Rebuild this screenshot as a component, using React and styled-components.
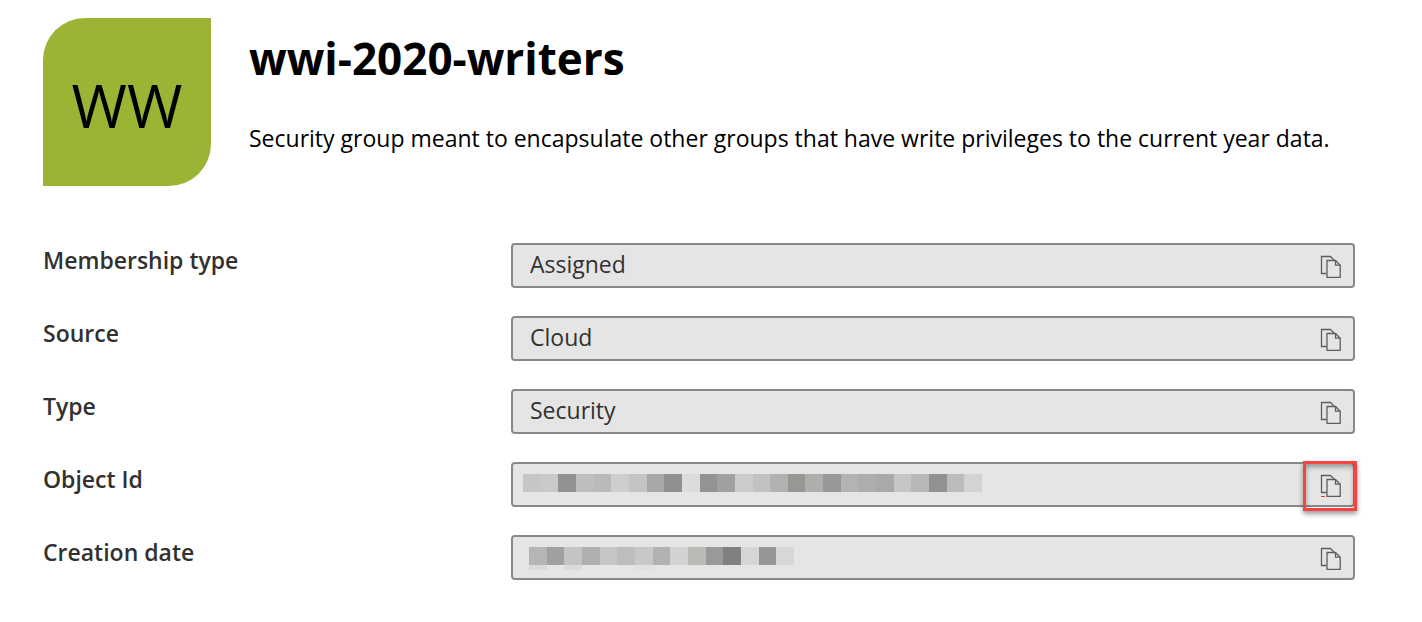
import React from "react";
import styled, { createGlobalStyle } from "styled-components";

const GlobalStyle = createGlobalStyle`
  *, *::before, *::after { box-sizing: border-box; }
  body {
    margin: 0;
    background: #fff;
    color: #000;
    font-family: "Segoe UI", "Open Sans", "Noto Sans", sans-serif;
    font-size: 23px;
  }
`;

const Page = styled.main`
  padding: 18px 67px 40px 43px;
`;

const Header = styled.header`
  display: flex;
  gap: 38px;
  margin-bottom: 57px;
`;

const Avatar = styled.div`
  flex: none;
  display: flex;
  align-items: center;
  justify-content: center;
  width: 168px;
  height: 168px;
  padding-top: 6px;
  border-radius: 42px 0;
  background: #9ab434;
  font-size: 60px;
  line-height: 80px;
`;

const Heading = styled.div`
  display: flex;
  flex-direction: column;
  gap: 34px;
  padding-top: 10px;
`;

const Title = styled.h1`
  margin: 0;
  font-size: 44px;
  font-weight: 700;
  line-height: 60px;
`;

const Description = styled.p`
  margin: 0;
  line-height: 32px;
`;

const Properties = styled.div`
  display: flex;
  flex-direction: column;
  gap: 28px;
`;

const Row = styled.div`
  display: grid;
  grid-template-columns: 468px 1fr;
`;

const Label = styled.label`
  color: #323130;
  font-weight: 600;
  line-height: 34px;
`;

const Field = styled.div`
  position: relative;
  display: flex;
  align-items: center;
  height: 45px;
  border: 2px solid #888;
  border-radius: 4px;
  background: #e5e5e5;
`;

const Value = styled.input`
  flex: 1;
  min-width: 0;
  height: 41px;
  padding: 0 17px 3px;
  border: 0;
  outline: 0;
  background: transparent;
  color: #323130;
  font: inherit;
`;

const Redacted = styled.output`
  flex: 1;
  min-width: 0;
  padding-left: ${(p) => p.$inset}px;
`;

const Mosaic = styled.svg`
  display: block;
  shape-rendering: crispEdges;
`;

const CopyButton = styled.button`
  flex: none;
  display: flex;
  padding: 0 11px;
  border: 0;
  background: transparent;
  color: #5e5e5e;
  cursor: pointer;
`;

const Highlight = styled.span`
  position: absolute;
  top: -3px;
  right: -4px;
  width: 54px;
  height: 50px;
  border: 3px solid #f94343;
  box-shadow: 0 3px 5px rgba(0, 0, 0, 0.4), inset 0 3px 5px rgba(0, 0, 0, 0.35);
  pointer-events: none;
`;

function CopyIcon({ marked }) {
  return (
    <svg width="22" height="27" viewBox="0 -3 22 27" fill="none" stroke="currentColor" strokeWidth="1.3" aria-hidden="true">
      <path d="M6.5 18.5H1.5V1.5H10.5L14 5" />
      <path d="M7 5.5H15.5L20.2 10.2V22.4H7Z" />
      <path d="M15.5 5.5V10.2H20.2" />
      {marked && <rect x="1" y="22" width="4" height="1" fill="#ff2a2a" stroke="none" />}
    </svg>
  );
}

const properties = [
  { id: "membership", label: "Membership type", value: "Assigned" },
  { id: "source", label: "Source", value: "Cloud" },
  { id: "type", label: "Type", value: "Security" },
  {
    id: "object-id",
    label: "Object Id",
    inset: 10,
    width: 459,
    highlighted: true,
    cells: [
      "#c6c6c6", "#c9c9c9", "#919191", "#bebebe", "#bababa", "#cecece", "#c4c4c4",
      "#a8a8a8", "#90908e", "#dcdcdc", "#939393", "#a0a09e", "#cccccc", "#c1c1c1",
      "#b1b1b1", "#979794", "#aeaeab", "#989898", "#b3b3b3", "#adadad", "#a9a9a9",
      "#c5c5c5", "#b8b8b8", "#929292", "#bcbcbc", "#d3d3d3",
    ],
  },
  {
    id: "created",
    label: "Creation date",
    inset: 16,
    width: 265,
    cells: [
      "#b5b5b3", "#a0a09e", "#c4c4c4", "#b0b0b0", "#c5c5c5", "#bdbdbd", "#c8c8c8",
      "#b2b2b2", "#d2d2d2", "#babab7", "#999999", "#81807e", "#d5d5d5", "#959593",
      "#d7d7d7",
    ],
    tails: { 0: "#dadada", 2: "#dbdbdb", 6: "#e0e0e0" },
  },
];

function PixelRow({ cells, width, tails = {} }) {
  const edge = (i) => Math.round((i * width) / cells.length);
  return (
    <Mosaic width={width} height="28" viewBox={`0 0 ${width} 28`} aria-hidden="true">
      {cells.map((color, i) => (
        <React.Fragment key={i}>
          <rect x={edge(i)} y="3" width={edge(i + 1) - edge(i)} height="18" fill={color} />
          {tails[i] && <rect x={edge(i)} y="21" width={edge(i + 1) - edge(i)} height="5" fill={tails[i]} />}
        </React.Fragment>
      ))}
    </Mosaic>
  );
}

export default function App() {
  return (
    <>
      <GlobalStyle />
      <Page>
        <Header>
          <Avatar>WW</Avatar>
          <Heading>
            <Title>wwi-2020-writers</Title>
            <Description>
              Security group meant to encapsulate other groups that have write privileges to the current year data.
            </Description>
          </Heading>
        </Header>
        <Properties>
          {properties.map((p) => (
            <Row key={p.id}>
              <Label htmlFor={p.id}>{p.label}</Label>
              <Field>
                {p.cells ? (
                  <Redacted id={p.id} $inset={p.inset}>
                    <PixelRow cells={p.cells} width={p.width} tails={p.tails} />
                  </Redacted>
                ) : (
                  <Value id={p.id} defaultValue={p.value} readOnly />
                )}
                <CopyButton type="button" aria-label={`Copy ${p.label}`}>
                  <CopyIcon marked={p.highlighted} />
                </CopyButton>
                {p.highlighted && <Highlight />}
              </Field>
            </Row>
          ))}
        </Properties>
      </Page>
    </>
  );
}
